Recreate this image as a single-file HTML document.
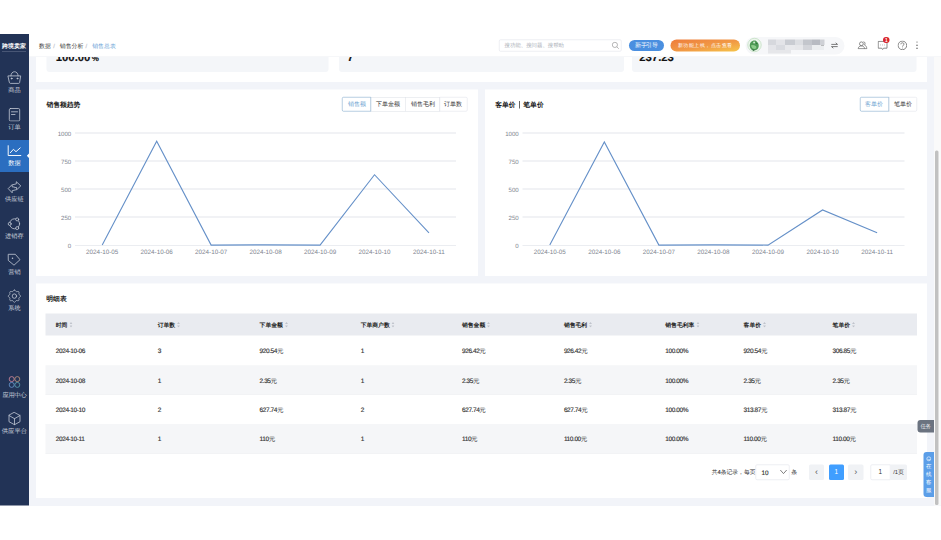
<!DOCTYPE html>
<html><head><meta charset="utf-8"><title>销售总表</title>
<style>
html,body{margin:0;padding:0;background:#fff;width:941px;height:540px;overflow:hidden}
#root{position:absolute;left:0;top:0;width:1882.0px;height:1080.0px;transform:scale(0.5);transform-origin:0 0;font-family:"Liberation Sans",sans-serif;overflow:hidden;background:#fff}
#root>div{position:absolute}
.t{white-space:nowrap;text-rendering:geometricPrecision;-webkit-text-stroke:0.30px currentColor}
i.c{font-style:normal;font-size:133.3%;-webkit-text-stroke:0.36px currentColor;position:relative;top:1.40px}
[style*="bold"] i.c{-webkit-text-stroke:0.60px currentColor}
[style*="--lt"] i.c{-webkit-text-stroke:0.40px currentColor}
.sort{display:inline-block;width:6.00px;height:10.80px;margin-left:4.00px;vertical-align:middle;position:relative;top:-1.00px}
.cjk i.c{font-size:100%;top:0;-webkit-text-stroke:0}
.cjk [style*="bold"] i.c,.cjk [style*="--lt"] i.c{-webkit-text-stroke:0}
</style></head><body><div id="root">
<div style="left:58.00px;top:114.00px;width:1824.00px;height:898.00px;background:#f2f4f9"></div>
<div style="left:72.00px;top:60.00px;width:1782.00px;height:104.00px;background:#fff"></div>
<div style="left:93.20px;top:40.00px;width:564.20px;height:103.60px;background:#f4f6f9;border-radius:6.00px"></div>
<div style="left:677.60px;top:40.00px;width:570.20px;height:103.60px;background:#f4f6f9;border-radius:6.00px"></div>
<div style="left:1263.80px;top:40.00px;width:569.20px;height:103.60px;background:#f4f6f9;border-radius:6.00px"></div>
<div class="t" style="left:111.60px;top:94.80px;height:40.00px;line-height:40.00px;font-size:22.60px;color:#111;font-weight:bold">100.00<span style="font-size:16.00px;margin-left:3.00px">%</span></div>
<div class="t" style="left:694.60px;top:94.80px;height:40.00px;line-height:40.00px;font-size:22.60px;color:#111;font-weight:bold">7</div>
<div class="t" style="left:1278.60px;top:94.80px;height:40.00px;line-height:40.00px;font-size:22.60px;color:#111;font-weight:bold">237.23</div>
<div style="left:71.80px;top:179.20px;width:884.00px;height:372.80px;background:#fff"></div>
<div class="t" style="left:92.80px;top:199.68px;height:19.04px;line-height:19.04px;font-size:13.60px;color:#1a1a1a;font-weight:bold;"><i class="c">销售额趋势</i></div>
<div style="left:684.20px;top:194.40px;width:58.20px;height:28.20px;z-index:2;border:1.20px solid #6e9cc2;box-sizing:border-box;background:#fff;color:#6c9fd0;font-size:11.60px;line-height:26.00px;text-align:center;border-radius:3.00px 0 0 3.00px;"><i class="c">销售额</i></div>
<div style="left:741.40px;top:194.40px;width:70.00px;height:28.20px;border:1.20px solid #dcdfe6;box-sizing:border-box;background:#fff;color:#333;font-size:11.60px;line-height:26.00px;text-align:center;"><i class="c">下单金额</i></div>
<div style="left:810.40px;top:194.40px;width:69.80px;height:28.20px;border:1.20px solid #dcdfe6;box-sizing:border-box;background:#fff;color:#333;font-size:11.60px;line-height:26.00px;text-align:center;"><i class="c">销售毛利</i></div>
<div style="left:879.20px;top:194.40px;width:55.60px;height:28.20px;border:1.20px solid #dcdfe6;box-sizing:border-box;background:#fff;color:#333;font-size:11.60px;line-height:26.00px;text-align:center;border-radius:0 3.00px 3.00px 0;"><i class="c">订单数</i></div>
<div style="left:150.00px;top:489.50px;width:762.40px;height:1.40px;background:#d6dae3"></div>
<div class="t" style="right:1739.60px;top:484.26px;height:17.08px;line-height:17.08px;font-size:12.20px;color:#80858f;font-weight:normal;text-align:right;-webkit-text-stroke:0">0</div>
<div style="left:150.00px;top:433.45px;width:762.40px;height:1.40px;background:#e3e6ec"></div>
<div class="t" style="right:1739.60px;top:428.21px;height:17.08px;line-height:17.08px;font-size:12.20px;color:#80858f;font-weight:normal;text-align:right;-webkit-text-stroke:0">250</div>
<div style="left:150.00px;top:377.40px;width:762.40px;height:1.40px;background:#e3e6ec"></div>
<div class="t" style="right:1739.60px;top:372.16px;height:17.08px;line-height:17.08px;font-size:12.20px;color:#80858f;font-weight:normal;text-align:right;-webkit-text-stroke:0">500</div>
<div style="left:150.00px;top:321.35px;width:762.40px;height:1.40px;background:#e3e6ec"></div>
<div class="t" style="right:1739.60px;top:316.11px;height:17.08px;line-height:17.08px;font-size:12.20px;color:#80858f;font-weight:normal;text-align:right;-webkit-text-stroke:0">750</div>
<div style="left:150.00px;top:265.30px;width:762.40px;height:1.40px;background:#e3e6ec"></div>
<div class="t" style="right:1739.60px;top:260.06px;height:17.08px;line-height:17.08px;font-size:12.20px;color:#80858f;font-weight:normal;text-align:right;-webkit-text-stroke:0">1000</div>
<div class="t" style="left:4.46px;width:400.00px;top:494.98px;height:17.64px;line-height:17.64px;font-size:12.60px;color:#80858f;font-weight:normal;text-align:center;-webkit-text-stroke:0">2024-10-05</div>
<div class="t" style="left:113.37px;width:400.00px;top:494.98px;height:17.64px;line-height:17.64px;font-size:12.60px;color:#80858f;font-weight:normal;text-align:center;-webkit-text-stroke:0">2024-10-06</div>
<div class="t" style="left:222.29px;width:400.00px;top:494.98px;height:17.64px;line-height:17.64px;font-size:12.60px;color:#80858f;font-weight:normal;text-align:center;-webkit-text-stroke:0">2024-10-07</div>
<div class="t" style="left:331.20px;width:400.00px;top:494.98px;height:17.64px;line-height:17.64px;font-size:12.60px;color:#80858f;font-weight:normal;text-align:center;-webkit-text-stroke:0">2024-10-08</div>
<div class="t" style="left:440.11px;width:400.00px;top:494.98px;height:17.64px;line-height:17.64px;font-size:12.60px;color:#80858f;font-weight:normal;text-align:center;-webkit-text-stroke:0">2024-10-09</div>
<div class="t" style="left:549.03px;width:400.00px;top:494.98px;height:17.64px;line-height:17.64px;font-size:12.60px;color:#80858f;font-weight:normal;text-align:center;-webkit-text-stroke:0">2024-10-10</div>
<div class="t" style="left:657.94px;width:400.00px;top:494.98px;height:17.64px;line-height:17.64px;font-size:12.60px;color:#80858f;font-weight:normal;text-align:center;-webkit-text-stroke:0">2024-10-11</div>
<svg style="position:absolute;left:0;top:0;overflow:visible" width="1882.0" height="1080.0"><polyline points="204.46,490.20 313.37,282.50 422.29,490.20 531.20,489.67 640.11,490.20 749.03,349.46 857.94,465.54" fill="none" stroke="#6590c8" stroke-width="2.2" stroke-linejoin="miter"/></svg>
<div style="left:970.20px;top:179.20px;width:883.80px;height:372.80px;background:#fff"></div>
<div class="t" style="left:990.40px;top:199.68px;height:19.04px;line-height:19.04px;font-size:13.60px;color:#1a1a1a;font-weight:bold;"><i class="c">客单价</i></div>
<div class="t" style="left:1046.60px;top:199.68px;height:19.04px;line-height:19.04px;font-size:13.60px;color:#1a1a1a;font-weight:bold;"><i class="c">笔单价</i></div>
<div style="left:1720.40px;top:194.40px;width:57.20px;height:28.20px;z-index:2;border:1.20px solid #6e9cc2;box-sizing:border-box;background:#fff;color:#6c9fd0;font-size:11.60px;line-height:26.00px;text-align:center;border-radius:3.00px 0 0 3.00px;"><i class="c">客单价</i></div>
<div style="left:1776.60px;top:194.40px;width:57.00px;height:28.20px;border:1.20px solid #dcdfe6;box-sizing:border-box;background:#fff;color:#333;font-size:11.60px;line-height:26.00px;text-align:center;border-radius:0 3.00px 3.00px 0;"><i class="c">笔单价</i></div>
<div style="left:1045.00px;top:489.50px;width:763.80px;height:1.40px;background:#d6dae3"></div>
<div class="t" style="right:844.60px;top:484.26px;height:17.08px;line-height:17.08px;font-size:12.20px;color:#80858f;font-weight:normal;text-align:right;-webkit-text-stroke:0">0</div>
<div style="left:1045.00px;top:433.45px;width:763.80px;height:1.40px;background:#e3e6ec"></div>
<div class="t" style="right:844.60px;top:428.21px;height:17.08px;line-height:17.08px;font-size:12.20px;color:#80858f;font-weight:normal;text-align:right;-webkit-text-stroke:0">250</div>
<div style="left:1045.00px;top:377.40px;width:763.80px;height:1.40px;background:#e3e6ec"></div>
<div class="t" style="right:844.60px;top:372.16px;height:17.08px;line-height:17.08px;font-size:12.20px;color:#80858f;font-weight:normal;text-align:right;-webkit-text-stroke:0">500</div>
<div style="left:1045.00px;top:321.35px;width:763.80px;height:1.40px;background:#e3e6ec"></div>
<div class="t" style="right:844.60px;top:316.11px;height:17.08px;line-height:17.08px;font-size:12.20px;color:#80858f;font-weight:normal;text-align:right;-webkit-text-stroke:0">750</div>
<div style="left:1045.00px;top:265.30px;width:763.80px;height:1.40px;background:#e3e6ec"></div>
<div class="t" style="right:844.60px;top:260.06px;height:17.08px;line-height:17.08px;font-size:12.20px;color:#80858f;font-weight:normal;text-align:right;-webkit-text-stroke:0">1000</div>
<div class="t" style="left:899.56px;width:400.00px;top:494.98px;height:17.64px;line-height:17.64px;font-size:12.60px;color:#80858f;font-weight:normal;text-align:center;-webkit-text-stroke:0">2024-10-05</div>
<div class="t" style="left:1008.67px;width:400.00px;top:494.98px;height:17.64px;line-height:17.64px;font-size:12.60px;color:#80858f;font-weight:normal;text-align:center;-webkit-text-stroke:0">2024-10-06</div>
<div class="t" style="left:1117.79px;width:400.00px;top:494.98px;height:17.64px;line-height:17.64px;font-size:12.60px;color:#80858f;font-weight:normal;text-align:center;-webkit-text-stroke:0">2024-10-07</div>
<div class="t" style="left:1226.90px;width:400.00px;top:494.98px;height:17.64px;line-height:17.64px;font-size:12.60px;color:#80858f;font-weight:normal;text-align:center;-webkit-text-stroke:0">2024-10-08</div>
<div class="t" style="left:1336.01px;width:400.00px;top:494.98px;height:17.64px;line-height:17.64px;font-size:12.60px;color:#80858f;font-weight:normal;text-align:center;-webkit-text-stroke:0">2024-10-09</div>
<div class="t" style="left:1445.13px;width:400.00px;top:494.98px;height:17.64px;line-height:17.64px;font-size:12.60px;color:#80858f;font-weight:normal;text-align:center;-webkit-text-stroke:0">2024-10-10</div>
<div class="t" style="left:1554.24px;width:400.00px;top:494.98px;height:17.64px;line-height:17.64px;font-size:12.60px;color:#80858f;font-weight:normal;text-align:center;-webkit-text-stroke:0">2024-10-11</div>
<svg style="position:absolute;left:0;top:0;overflow:visible" width="1882.0" height="1080.0"><polyline points="1099.56,490.20 1208.67,283.81 1317.79,490.20 1426.90,489.67 1536.01,490.20 1645.13,419.83 1754.24,465.54" fill="none" stroke="#6590c8" stroke-width="2.2" stroke-linejoin="miter"/></svg>
<div style="left:1038.40px;top:202.40px;width:1.40px;height:14.40px;background:#666"></div>
<div style="left:71.80px;top:567.40px;width:1782.20px;height:429.00px;background:#fff"></div>
<div class="t" style="left:92.60px;top:588.28px;height:19.04px;line-height:19.04px;font-size:13.60px;color:#1a1a1a;font-weight:bold;"><i class="c">明细表</i></div>
<div style="left:91.40px;top:627.40px;width:1742.20px;height:43.60px;background:#e9ebf0"></div>
<div class="t" style="left:111.60px;top:642.28px;height:16.24px;line-height:16.24px;font-size:11.60px;color:#222;font-weight:bold;--lt:1"><i class="c">时间</i><svg class="sort" viewBox="0 0 6 11"><path d="M3 0 L6 4 H0Z M3 11 L6 7 H0Z" fill="#c0c4cc"/></svg></div>
<div class="t" style="left:315.40px;top:642.28px;height:16.24px;line-height:16.24px;font-size:11.60px;color:#222;font-weight:bold;--lt:1"><i class="c">订单数</i><svg class="sort" viewBox="0 0 6 11"><path d="M3 0 L6 4 H0Z M3 11 L6 7 H0Z" fill="#c0c4cc"/></svg></div>
<div class="t" style="left:519.20px;top:642.28px;height:16.24px;line-height:16.24px;font-size:11.60px;color:#222;font-weight:bold;--lt:1"><i class="c">下单金额</i><svg class="sort" viewBox="0 0 6 11"><path d="M3 0 L6 4 H0Z M3 11 L6 7 H0Z" fill="#c0c4cc"/></svg></div>
<div class="t" style="left:721.40px;top:642.28px;height:16.24px;line-height:16.24px;font-size:11.60px;color:#222;font-weight:bold;--lt:1"><i class="c">下单商户数</i><svg class="sort" viewBox="0 0 6 11"><path d="M3 0 L6 4 H0Z M3 11 L6 7 H0Z" fill="#c0c4cc"/></svg></div>
<div class="t" style="left:924.00px;top:642.28px;height:16.24px;line-height:16.24px;font-size:11.60px;color:#222;font-weight:bold;--lt:1"><i class="c">销售金额</i><svg class="sort" viewBox="0 0 6 11"><path d="M3 0 L6 4 H0Z M3 11 L6 7 H0Z" fill="#c0c4cc"/></svg></div>
<div class="t" style="left:1127.80px;top:642.28px;height:16.24px;line-height:16.24px;font-size:11.60px;color:#222;font-weight:bold;--lt:1"><i class="c">销售毛利</i><svg class="sort" viewBox="0 0 6 11"><path d="M3 0 L6 4 H0Z M3 11 L6 7 H0Z" fill="#c0c4cc"/></svg></div>
<div class="t" style="left:1330.60px;top:642.28px;height:16.24px;line-height:16.24px;font-size:11.60px;color:#222;font-weight:bold;--lt:1"><i class="c">销售毛利率</i><svg class="sort" viewBox="0 0 6 11"><path d="M3 0 L6 4 H0Z M3 11 L6 7 H0Z" fill="#c0c4cc"/></svg></div>
<div class="t" style="left:1487.20px;top:642.28px;height:16.24px;line-height:16.24px;font-size:11.60px;color:#222;font-weight:bold;--lt:1"><i class="c">客单价</i><svg class="sort" viewBox="0 0 6 11"><path d="M3 0 L6 4 H0Z M3 11 L6 7 H0Z" fill="#c0c4cc"/></svg></div>
<div class="t" style="left:1665.20px;top:642.28px;height:16.24px;line-height:16.24px;font-size:11.60px;color:#222;font-weight:bold;--lt:1"><i class="c">笔单价</i><svg class="sort" viewBox="0 0 6 11"><path d="M3 0 L6 4 H0Z M3 11 L6 7 H0Z" fill="#c0c4cc"/></svg></div>
<div style="left:91.40px;top:731.00px;width:1742.20px;height:1.20px;background:#eef0f3"></div>
<div class="t" style="left:111.60px;top:692.60px;height:18.20px;line-height:18.20px;font-size:13.00px;color:#333;font-weight:normal;letter-spacing:-0.84px">2024-10-06</div>
<div class="t" style="left:315.40px;top:692.60px;height:18.20px;line-height:18.20px;font-size:13.00px;color:#333;font-weight:normal;letter-spacing:-0.84px">3</div>
<div class="t" style="left:519.20px;top:692.60px;height:18.20px;line-height:18.20px;font-size:13.00px;color:#333;font-weight:normal;letter-spacing:-0.84px">920.54<i class="c">元</i></div>
<div class="t" style="left:721.40px;top:692.60px;height:18.20px;line-height:18.20px;font-size:13.00px;color:#333;font-weight:normal;letter-spacing:-0.84px">1</div>
<div class="t" style="left:924.00px;top:692.60px;height:18.20px;line-height:18.20px;font-size:13.00px;color:#333;font-weight:normal;letter-spacing:-0.84px">926.42<i class="c">元</i></div>
<div class="t" style="left:1127.80px;top:692.60px;height:18.20px;line-height:18.20px;font-size:13.00px;color:#333;font-weight:normal;letter-spacing:-0.84px">926.42<i class="c">元</i></div>
<div class="t" style="left:1330.60px;top:692.60px;height:18.20px;line-height:18.20px;font-size:13.00px;color:#333;font-weight:normal;letter-spacing:-0.84px">100.00%</div>
<div class="t" style="left:1487.20px;top:692.60px;height:18.20px;line-height:18.20px;font-size:13.00px;color:#333;font-weight:normal;letter-spacing:-0.84px">920.54<i class="c">元</i></div>
<div class="t" style="left:1665.20px;top:692.60px;height:18.20px;line-height:18.20px;font-size:13.00px;color:#333;font-weight:normal;letter-spacing:-0.84px">306.85<i class="c">元</i></div>
<div style="left:91.40px;top:731.60px;width:1742.20px;height:58.00px;background:#f5f6f8"></div>
<div style="left:91.40px;top:789.00px;width:1742.20px;height:1.20px;background:#eef0f3"></div>
<div class="t" style="left:111.60px;top:751.90px;height:18.20px;line-height:18.20px;font-size:13.00px;color:#333;font-weight:normal;letter-spacing:-0.84px">2024-10-08</div>
<div class="t" style="left:315.40px;top:751.90px;height:18.20px;line-height:18.20px;font-size:13.00px;color:#333;font-weight:normal;letter-spacing:-0.84px">1</div>
<div class="t" style="left:519.20px;top:751.90px;height:18.20px;line-height:18.20px;font-size:13.00px;color:#333;font-weight:normal;letter-spacing:-0.84px">2.35<i class="c">元</i></div>
<div class="t" style="left:721.40px;top:751.90px;height:18.20px;line-height:18.20px;font-size:13.00px;color:#333;font-weight:normal;letter-spacing:-0.84px">1</div>
<div class="t" style="left:924.00px;top:751.90px;height:18.20px;line-height:18.20px;font-size:13.00px;color:#333;font-weight:normal;letter-spacing:-0.84px">2.35<i class="c">元</i></div>
<div class="t" style="left:1127.80px;top:751.90px;height:18.20px;line-height:18.20px;font-size:13.00px;color:#333;font-weight:normal;letter-spacing:-0.84px">2.35<i class="c">元</i></div>
<div class="t" style="left:1330.60px;top:751.90px;height:18.20px;line-height:18.20px;font-size:13.00px;color:#333;font-weight:normal;letter-spacing:-0.84px">100.00%</div>
<div class="t" style="left:1487.20px;top:751.90px;height:18.20px;line-height:18.20px;font-size:13.00px;color:#333;font-weight:normal;letter-spacing:-0.84px">2.35<i class="c">元</i></div>
<div class="t" style="left:1665.20px;top:751.90px;height:18.20px;line-height:18.20px;font-size:13.00px;color:#333;font-weight:normal;letter-spacing:-0.84px">2.35<i class="c">元</i></div>
<div style="left:91.40px;top:847.60px;width:1742.20px;height:1.20px;background:#eef0f3"></div>
<div class="t" style="left:111.60px;top:810.20px;height:18.20px;line-height:18.20px;font-size:13.00px;color:#333;font-weight:normal;letter-spacing:-0.84px">2024-10-10</div>
<div class="t" style="left:315.40px;top:810.20px;height:18.20px;line-height:18.20px;font-size:13.00px;color:#333;font-weight:normal;letter-spacing:-0.84px">2</div>
<div class="t" style="left:519.20px;top:810.20px;height:18.20px;line-height:18.20px;font-size:13.00px;color:#333;font-weight:normal;letter-spacing:-0.84px">627.74<i class="c">元</i></div>
<div class="t" style="left:721.40px;top:810.20px;height:18.20px;line-height:18.20px;font-size:13.00px;color:#333;font-weight:normal;letter-spacing:-0.84px">2</div>
<div class="t" style="left:924.00px;top:810.20px;height:18.20px;line-height:18.20px;font-size:13.00px;color:#333;font-weight:normal;letter-spacing:-0.84px">627.74<i class="c">元</i></div>
<div class="t" style="left:1127.80px;top:810.20px;height:18.20px;line-height:18.20px;font-size:13.00px;color:#333;font-weight:normal;letter-spacing:-0.84px">627.74<i class="c">元</i></div>
<div class="t" style="left:1330.60px;top:810.20px;height:18.20px;line-height:18.20px;font-size:13.00px;color:#333;font-weight:normal;letter-spacing:-0.84px">100.00%</div>
<div class="t" style="left:1487.20px;top:810.20px;height:18.20px;line-height:18.20px;font-size:13.00px;color:#333;font-weight:normal;letter-spacing:-0.84px">313.87<i class="c">元</i></div>
<div class="t" style="left:1665.20px;top:810.20px;height:18.20px;line-height:18.20px;font-size:13.00px;color:#333;font-weight:normal;letter-spacing:-0.84px">313.87<i class="c">元</i></div>
<div style="left:91.40px;top:848.20px;width:1742.20px;height:59.60px;background:#f5f6f8"></div>
<div style="left:91.40px;top:907.20px;width:1742.20px;height:1.20px;background:#eef0f3"></div>
<div class="t" style="left:111.60px;top:869.30px;height:18.20px;line-height:18.20px;font-size:13.00px;color:#333;font-weight:normal;letter-spacing:-0.84px">2024-10-11</div>
<div class="t" style="left:315.40px;top:869.30px;height:18.20px;line-height:18.20px;font-size:13.00px;color:#333;font-weight:normal;letter-spacing:-0.84px">1</div>
<div class="t" style="left:519.20px;top:869.30px;height:18.20px;line-height:18.20px;font-size:13.00px;color:#333;font-weight:normal;letter-spacing:-0.84px">110<i class="c">元</i></div>
<div class="t" style="left:721.40px;top:869.30px;height:18.20px;line-height:18.20px;font-size:13.00px;color:#333;font-weight:normal;letter-spacing:-0.84px">1</div>
<div class="t" style="left:924.00px;top:869.30px;height:18.20px;line-height:18.20px;font-size:13.00px;color:#333;font-weight:normal;letter-spacing:-0.84px">110<i class="c">元</i></div>
<div class="t" style="left:1127.80px;top:869.30px;height:18.20px;line-height:18.20px;font-size:13.00px;color:#333;font-weight:normal;letter-spacing:-0.84px">110.00<i class="c">元</i></div>
<div class="t" style="left:1330.60px;top:869.30px;height:18.20px;line-height:18.20px;font-size:13.00px;color:#333;font-weight:normal;letter-spacing:-0.84px">100.00%</div>
<div class="t" style="left:1487.20px;top:869.30px;height:18.20px;line-height:18.20px;font-size:13.00px;color:#333;font-weight:normal;letter-spacing:-0.84px">110.00<i class="c">元</i></div>
<div class="t" style="left:1665.20px;top:869.30px;height:18.20px;line-height:18.20px;font-size:13.00px;color:#333;font-weight:normal;letter-spacing:-0.84px">110.00<i class="c">元</i></div>
<div class="t" style="left:1423.40px;top:936.68px;height:16.24px;line-height:16.24px;font-size:11.60px;color:#333;font-weight:normal;"><i class="c">共</i>4<i class="c">条记录，每页</i></div>
<div style="left:1511.20px;top:929.00px;width:68.00px;height:30.60px;border:1.20px solid #dcdfe6;box-sizing:border-box;background:#fff;border-radius:3.00px"></div>
<div class="t" style="left:1523.00px;top:935.84px;height:17.92px;line-height:17.92px;font-size:12.80px;color:#333;font-weight:normal;">10</div>
<svg style="position:absolute;left:1559.00px;top:938.40px" width="16.00px" height="12.00px" viewBox="0 0 8 6"><polyline points="0.8,1 4,4.6 7.2,1" fill="none" stroke="#555" stroke-width="0.75"/></svg>
<div class="t" style="left:1582.60px;top:936.68px;height:16.24px;line-height:16.24px;font-size:11.60px;color:#333;font-weight:normal;"><i class="c">条</i></div>
<div style="left:1618.20px;top:929.00px;width:29.60px;height:30.60px;background:#f0f2f5;border-radius:3.00px;color:#555;font-size:18.00px;line-height:29.00px;text-align:center">&lsaquo;</div>
<div style="left:1658.00px;top:929.00px;width:29.60px;height:30.60px;background:#409eff;border-radius:3.00px;color:#fff;font-size:12.80px;line-height:30.60px;text-align:center">1</div>
<div style="left:1696.40px;top:929.00px;width:30.60px;height:30.60px;background:#f0f2f5;border-radius:3.00px;color:#555;font-size:18.00px;line-height:29.00px;text-align:center">&rsaquo;</div>
<div style="left:1740.80px;top:929.00px;width:40.00px;height:30.60px;border:1.20px solid #dcdfe6;box-sizing:border-box;background:#fff;border-radius:3.00px 0 0 3.00px;color:#333;font-size:12.80px;line-height:28.00px;text-align:center">1</div>
<div style="left:1780.60px;top:929.00px;width:33.00px;height:30.60px;background:#f0f2f5;border-radius:0 3.00px 3.00px 0;color:#333;font-size:11.60px;line-height:30.60px;text-align:center">/1<i class="c">页</i></div>
<div style="left:1835.20px;top:840.40px;width:32.40px;height:24.80px;background:#6b7380;border-radius:6.00px 0 0 6.00px"></div>
<div class="t" style="left:1651.60px;width:400.00px;top:845.64px;height:15.12px;line-height:15.12px;font-size:10.80px;color:#eef0f3;font-weight:normal;text-align:center;"><i class="c">任务</i></div>
<div style="left:1847.00px;top:904.40px;width:21.00px;height:89.60px;background:#5b9ee8;border-radius:6.00px 0 0 6.00px"></div>
<svg style="position:absolute;left:1851.80px;top:912.40px" width="11.20px" height="11.20px" viewBox="0 0 5.6 5.6" fill="none" stroke="#fff" stroke-width="0.6"><circle cx="2.8" cy="2.8" r="2"/><path d="M1.6 3.2 C2.2 3.9 3.4 3.9 4 3.2"/></svg>
<div class="t" style="left:1657.60px;width:400.00px;top:926.44px;height:15.12px;line-height:15.12px;font-size:10.80px;color:#fff;font-weight:normal;text-align:center;"><i class="c">在</i></div>
<div class="t" style="left:1657.60px;width:400.00px;top:942.04px;height:15.12px;line-height:15.12px;font-size:10.80px;color:#fff;font-weight:normal;text-align:center;"><i class="c">线</i></div>
<div class="t" style="left:1657.60px;width:400.00px;top:957.64px;height:15.12px;line-height:15.12px;font-size:10.80px;color:#fff;font-weight:normal;text-align:center;"><i class="c">客</i></div>
<div class="t" style="left:1657.60px;width:400.00px;top:973.24px;height:15.12px;line-height:15.12px;font-size:10.80px;color:#fff;font-weight:normal;text-align:center;"><i class="c">服</i></div>
<div style="left:1868.00px;top:114.00px;width:14.00px;height:897.20px;background:#fafafa"></div>
<div style="left:1869.60px;top:301.00px;width:7.60px;height:709.00px;background:#c1c1c1;border-radius:3.00px"></div>
<div style="left:0.00px;top:0.00px;width:1882.00px;height:68.00px;background:#fff"></div>
<div style="left:58.00px;top:68.00px;width:1824.00px;height:46.00px;background:#fff;border-bottom:1.20px solid #eceef2;box-sizing:border-box"></div>
<div class="t" style="left:78.00px;top:84.14px;height:16.52px;line-height:16.52px;font-size:11.80px;color:#333;font-weight:normal;"><i class="c">数据</i></div>
<div class="t" style="left:106.40px;top:84.14px;height:16.52px;line-height:16.52px;font-size:11.80px;color:#c0c4cc;font-weight:normal;">/</div>
<div class="t" style="left:119.60px;top:84.14px;height:16.52px;line-height:16.52px;font-size:11.80px;color:#333;font-weight:normal;"><i class="c">销售分析</i></div>
<div class="t" style="left:171.20px;top:84.14px;height:16.52px;line-height:16.52px;font-size:11.80px;color:#c0c4cc;font-weight:normal;">/</div>
<div class="t" style="left:184.40px;top:84.14px;height:16.52px;line-height:16.52px;font-size:11.80px;color:#6a9fd6;font-weight:normal;"><i class="c">销售总表</i></div>
<div style="left:998.40px;top:78.80px;width:244.80px;height:23.80px;border:1.20px solid #dcdfe6;box-sizing:border-box;background:#fff;border-radius:3.00px"></div>
<div class="t" style="left:1009.20px;top:83.24px;height:15.12px;line-height:15.12px;font-size:10.80px;color:#a9aeb6;font-weight:normal;"><i class="c">搜功能、搜问题、搜帮助</i></div>
<svg style="position:absolute;left:1223.00px;top:82.60px" width="16.00px" height="16.00px" viewBox="0 0 8 8"><circle cx="3.4" cy="3.4" r="2.6" fill="none" stroke="#888" stroke-width="0.6"/><line x1="5.3" y1="5.3" x2="7.3" y2="7.3" stroke="#888" stroke-width="0.6"/></svg>
<div style="left:1257.60px;top:80.40px;width:70.80px;height:21.40px;background:#4a8fe0;border-radius:12.00px;color:#fff;font-size:11.20px;line-height:21.40px;text-align:center"><i class="c">新手引导</i></div>
<div style="left:1340.80px;top:78.80px;width:139.20px;height:23.80px;background:linear-gradient(170deg,#ee7c3c 0%,#f19a45 55%,#f6c54b 100%);border-radius:12.00px;color:#fff;font-size:10.80px;line-height:23.80px;text-align:center"><i class="c">新功能上线，点击查看</i></div>
<div style="left:1490.60px;top:74.40px;width:198.80px;height:34.20px;background:#f6f7f9;border-radius:18.00px"></div>
<div style="left:1494.80px;top:75.80px;width:28.00px;height:28.00px;background:#eef6ee;border:1.20px solid #a9d3a6;border-radius:50%;box-sizing:border-box"></div>
<svg style="position:absolute;left:1494.80px;top:75.80px" width="28.00px" height="28.00px" viewBox="0 0 14 14"><path d="M2.6 9.6 C1.6 6.4 3 3.4 6 2.6 C7.6 2.2 8.6 2.6 9.4 3.8 C11.2 5 11.8 7.6 10.8 10 C10 12 7.6 12.8 5.4 12.4 C4 12.1 3.1 11.1 2.6 9.6Z" fill="#4f9a55"/><path d="M3.4 7.6 C4.6 6.6 6.6 6.8 8.2 8 C9 8.6 9.2 9.8 8.4 10.6 C6.8 11.6 4.4 11 3.4 7.6Z" fill="#8ccc8a"/><circle cx="6.6" cy="4.6" r="1" fill="#cfe9cf"/><circle cx="9.2" cy="5.4" r="0.7" fill="#2f6f3a"/><path d="M4.6 11.4 L6.2 13 L7.2 11.8" fill="#2f5f40"/></svg>
<div style="left:1535.60px;top:78.60px;width:16.00px;height:11.00px;background:#d6d8dd"></div>
<div style="left:1551.60px;top:78.60px;width:18.00px;height:11.00px;background:#e3e4e8"></div>
<div style="left:1569.60px;top:78.60px;width:20.00px;height:11.00px;background:#c9ccd2"></div>
<div style="left:1589.60px;top:78.60px;width:16.00px;height:11.00px;background:#dcdee2"></div>
<div style="left:1605.60px;top:78.60px;width:18.00px;height:11.00px;background:#c3c6cc"></div>
<div style="left:1623.60px;top:78.60px;width:16.00px;height:11.00px;background:#b8bbc2"></div>
<div style="left:1639.60px;top:78.60px;width:9.20px;height:11.00px;background:#cfd1d6"></div>
<div style="left:1535.60px;top:89.60px;width:16.00px;height:10.40px;background:#e4e5e9"></div>
<div style="left:1551.60px;top:89.60px;width:18.00px;height:10.40px;background:#d9dbe0"></div>
<div style="left:1569.60px;top:89.60px;width:20.00px;height:10.40px;background:#e8e9ec"></div>
<div style="left:1589.60px;top:89.60px;width:16.00px;height:10.40px;background:#e6e7ea"></div>
<div style="left:1605.60px;top:89.60px;width:18.00px;height:10.40px;background:#d3d5da"></div>
<div style="left:1623.60px;top:89.60px;width:24.00px;height:10.40px;background:#eceef0"></div>
<div style="left:1535.60px;top:100.00px;width:46.00px;height:7.20px;background:#e6e7ea"></div>
<div style="left:1642.00px;top:90.00px;width:6.00px;height:1.40px;background:#888"></div>
<svg style="position:absolute;left:1661.00px;top:84.00px" width="16.00px" height="14.00px" viewBox="0 0 8 7" fill="none" stroke="#444" stroke-width="0.7"><path d="M0.8 2.4 H7 L5.2 0.8 M7.2 4.6 H1 L2.8 6.2"/></svg>
<svg style="position:absolute;left:1714.00px;top:81.00px" width="22.00px" height="18.00px" viewBox="0 0 11 9" fill="none" stroke="#666" stroke-width="0.75" stroke-linejoin="round">
<circle cx="4.4" cy="3.3" r="1.9"/><path d="M1.2 8.2 C1.4 6.2 2.8 5.4 4.4 5.4 C6 5.4 7.4 6.2 7.6 8.2 Z"/><path d="M6.4 1.3 C7.9 1.3 8.6 3 7.6 4.6 C8.9 5.1 9.7 6.3 9.8 8.2 H7.6"/></svg>
<svg style="position:absolute;left:1754.60px;top:81.00px" width="21.00px" height="20.00px" viewBox="0 0 10.5 10" fill="none" stroke="#666" stroke-width="0.75" stroke-linejoin="round">
<path d="M0.7 0.9 H9.5 V7.7 H6 L5.1 9 L4.2 7.7 H0.7 Z"/><circle cx="3.2" cy="4.4" r="0.45" fill="#666" stroke="none"/><circle cx="5.1" cy="4.4" r="0.45" fill="#666" stroke="none"/><circle cx="7" cy="4.4" r="0.45" fill="#666" stroke="none"/></svg>
<div style="left:1766.40px;top:73.60px;width:12.80px;height:12.80px;background:#d9252b;border-radius:50%;color:#fff;font-size:9.60px;line-height:12.80px;text-align:center;font-weight:bold">1</div>
<svg style="position:absolute;left:1794.60px;top:80.60px" width="19.60px" height="19.60px" viewBox="0 0 9.8 9.8" fill="none" stroke="#555" stroke-width="0.7">
<circle cx="4.9" cy="4.9" r="4.3"/><path d="M3.4 3.8 C3.4 2.7 4.1 2.3 4.9 2.3 C5.8 2.3 6.5 2.9 6.5 3.7 C6.5 4.8 5 4.9 5 6.1"/><circle cx="5" cy="7.5" r="0.42" fill="#555" stroke="none"/></svg>
<div style="left:1832.60px;top:82.70px;width:2.60px;height:2.60px;background:#333;border-radius:50%"></div>
<div style="left:1832.60px;top:89.10px;width:2.60px;height:2.60px;background:#333;border-radius:50%"></div>
<div style="left:1832.60px;top:95.30px;width:2.60px;height:2.60px;background:#333;border-radius:50%"></div>
<div style="left:0.00px;top:68.00px;width:58.00px;height:943.20px;background:#223356"></div>
<div class="t" style="left:-172.00px;width:400.00px;top:83.60px;height:16.80px;line-height:16.80px;font-size:12.00px;color:#fff;font-weight:bold;text-align:center;font-style:italic"><i class="c">跨境卖家</i></div>
<div style="left:4.00px;top:102.00px;width:48.00px;height:1.00px;background:#6f7b94"></div>
<div style="left:0.00px;top:280.20px;width:58.00px;height:63.40px;background:#2b6ec0"></div>
<svg style="position:absolute;left:53.20px;top:306.00px" width="6.00px" height="11.00px" viewBox="0 0 3 5.5"><path d="M3 0 L0.3 2.75 L3 5.5Z" fill="#fff"/></svg>
<svg style="position:absolute;left:14.00px;top:141.00px" width="30.00px" height="28.00px" viewBox="0 0 15 14" fill="none" stroke="#c3c9d6" stroke-width="0.8" stroke-linejoin="round" stroke-linecap="round"><path d="M1.3 5.4 H13.7 L12.6 12.1 Q12.4 12.9 11.6 12.9 H3.4 Q2.6 12.9 2.4 12.1 Z"/><path d="M3.9 5.4 C3.9 -0.3 11.1 -0.3 11.1 5.4"/><circle cx="4.6" cy="8" r="0.5" fill="#c3c9d6"/><circle cx="10.4" cy="8" r="0.5" fill="#c3c9d6"/></svg>
<div class="t" style="left:-171.20px;width:400.00px;top:171.72px;height:17.36px;line-height:17.36px;font-size:12.40px;color:#c9cfdb;font-weight:normal;text-align:center;"><i class="c">商品</i></div>
<svg style="position:absolute;left:14.00px;top:215.00px" width="30.00px" height="28.00px" viewBox="0 0 15 14" fill="none" stroke="#c3c9d6" stroke-width="0.8" stroke-linejoin="round" stroke-linecap="round"><rect x="2.3" y="1" width="10.4" height="12.5" rx="1.3"/><path d="M4.5 4.3 H10.5 M4.5 7 H8"/></svg>
<div class="t" style="left:-171.20px;width:400.00px;top:245.32px;height:17.36px;line-height:17.36px;font-size:12.40px;color:#c9cfdb;font-weight:normal;text-align:center;"><i class="c">订单</i></div>
<svg style="position:absolute;left:14.00px;top:287.00px" width="30.00px" height="28.00px" viewBox="0 0 15 14" fill="none" stroke="#fff" stroke-width="0.95" stroke-linejoin="round" stroke-linecap="round"><path d="M1.2 2.2 V12 H13.8"/><path d="M3.4 9.2 L6.4 5.8 L9 8.2 L13.2 4.4"/></svg>
<div class="t" style="left:-171.20px;width:400.00px;top:317.72px;height:17.36px;line-height:17.36px;font-size:12.40px;color:#fff;font-weight:normal;text-align:center;"><i class="c">数据</i></div>
<svg style="position:absolute;left:14.00px;top:360.60px" width="30.00px" height="28.00px" viewBox="0 0 15 14" fill="none" stroke="#c3c9d6" stroke-width="0.8" stroke-linejoin="round" stroke-linecap="round"><path d="M5.8 4.2 L9.3 3.4 L9.3 1.2 L13.8 5.4 L9.6 9.3 L9.5 6.9 L7.6 7.2"/><path d="M8.8 9.3 L5.2 10.2 L5.2 12.3 L1.2 8.1 L5.1 4.1 L5.2 6.4 L7.2 6.5"/></svg>
<div class="t" style="left:-171.20px;width:400.00px;top:390.12px;height:17.36px;line-height:17.36px;font-size:12.40px;color:#c9cfdb;font-weight:normal;text-align:center;"><i class="c">供应链</i></div>
<svg style="position:absolute;left:14.00px;top:432.60px" width="30.00px" height="28.00px" viewBox="0 0 15 14" fill="none" stroke="#c3c9d6" stroke-width="0.8" stroke-linejoin="round" stroke-linecap="round"><circle cx="7.6" cy="7.3" r="5"/><circle cx="10.2" cy="2.9" r="1.5" fill="#223356"/><circle cx="2.7" cy="7.4" r="1.5" fill="#223356"/><circle cx="10.2" cy="11.6" r="1.5" fill="#223356"/></svg>
<div class="t" style="left:-171.20px;width:400.00px;top:463.32px;height:17.36px;line-height:17.36px;font-size:12.40px;color:#c9cfdb;font-weight:normal;text-align:center;"><i class="c">进销存</i></div>
<svg style="position:absolute;left:14.00px;top:506.00px" width="30.00px" height="28.00px" viewBox="0 0 15 14" fill="none" stroke="#c3c9d6" stroke-width="0.8" stroke-linejoin="round" stroke-linecap="round"><path d="M1.6 1.3 H8.3 L13 6.7 L7 12.2 L1.6 7.7 Z"/><circle cx="5.5" cy="5.2" r="0.75" fill="#c3c9d6" stroke="none"/></svg>
<div class="t" style="left:-171.20px;width:400.00px;top:535.32px;height:17.36px;line-height:17.36px;font-size:12.40px;color:#c9cfdb;font-weight:normal;text-align:center;"><i class="c">营销</i></div>
<svg style="position:absolute;left:14.00px;top:579.40px" width="30.00px" height="28.00px" viewBox="0 0 15 14" fill="none" stroke="#c3c9d6" stroke-width="0.8" stroke-linejoin="round" stroke-linecap="round"><path d="M7.40 0.45 L7.64 0.49 L7.87 0.59 L8.09 0.76 L8.29 0.97 L8.47 1.21 L8.64 1.45 L8.79 1.67 L8.94 1.87 L9.09 2.02 L9.26 2.12 L9.44 2.17 L9.66 2.17 L9.90 2.13 L10.17 2.08 L10.46 2.03 L10.75 1.99 L11.04 1.98 L11.31 2.02 L11.55 2.11 L11.75 2.25 L11.89 2.45 L11.98 2.69 L12.02 2.96 L12.01 3.25 L11.97 3.54 L11.92 3.83 L11.87 4.10 L11.83 4.34 L11.83 4.56 L11.88 4.74 L11.98 4.91 L12.13 5.06 L12.33 5.21 L12.55 5.36 L12.79 5.53 L13.03 5.71 L13.24 5.91 L13.41 6.13 L13.51 6.36 L13.55 6.60 L13.51 6.84 L13.41 7.07 L13.24 7.29 L13.03 7.49 L12.79 7.67 L12.55 7.84 L12.33 7.99 L12.13 8.14 L11.98 8.29 L11.88 8.46 L11.83 8.64 L11.83 8.86 L11.87 9.10 L11.92 9.37 L11.97 9.66 L12.01 9.95 L12.02 10.24 L11.98 10.51 L11.89 10.75 L11.75 10.95 L11.55 11.09 L11.31 11.18 L11.04 11.22 L10.75 11.21 L10.46 11.17 L10.17 11.12 L9.90 11.07 L9.66 11.03 L9.44 11.03 L9.26 11.08 L9.09 11.18 L8.94 11.33 L8.79 11.53 L8.64 11.75 L8.47 11.99 L8.29 12.23 L8.09 12.44 L7.87 12.61 L7.64 12.71 L7.40 12.75 L7.16 12.71 L6.93 12.61 L6.71 12.44 L6.51 12.23 L6.33 11.99 L6.16 11.75 L6.01 11.53 L5.86 11.33 L5.71 11.18 L5.54 11.08 L5.36 11.03 L5.14 11.03 L4.90 11.07 L4.63 11.12 L4.34 11.17 L4.05 11.21 L3.76 11.22 L3.49 11.18 L3.25 11.09 L3.05 10.95 L2.91 10.75 L2.82 10.51 L2.78 10.24 L2.79 9.95 L2.83 9.66 L2.88 9.37 L2.93 9.10 L2.97 8.86 L2.97 8.64 L2.92 8.46 L2.82 8.29 L2.67 8.14 L2.47 7.99 L2.25 7.84 L2.01 7.67 L1.77 7.49 L1.56 7.29 L1.39 7.07 L1.29 6.84 L1.25 6.60 L1.29 6.36 L1.39 6.13 L1.56 5.91 L1.77 5.71 L2.01 5.53 L2.25 5.36 L2.47 5.21 L2.67 5.06 L2.82 4.91 L2.92 4.74 L2.97 4.56 L2.97 4.34 L2.93 4.10 L2.88 3.83 L2.83 3.54 L2.79 3.25 L2.78 2.96 L2.82 2.69 L2.91 2.45 L3.05 2.25 L3.25 2.11 L3.49 2.02 L3.76 1.98 L4.05 1.99 L4.34 2.03 L4.63 2.08 L4.90 2.13 L5.14 2.17 L5.36 2.17 L5.54 2.12 L5.71 2.02 L5.86 1.87 L6.01 1.67 L6.16 1.45 L6.33 1.21 L6.51 0.97 L6.71 0.76 L6.93 0.59 L7.16 0.49 L7.40 0.45Z"/><circle cx="7.4" cy="6.6" r="2.2"/></svg>
<div class="t" style="left:-171.20px;width:400.00px;top:607.92px;height:17.36px;line-height:17.36px;font-size:12.40px;color:#c9cfdb;font-weight:normal;text-align:center;"><i class="c">系统</i></div>
<svg style="position:absolute;left:14.60px;top:751.00px" width="28.00px" height="26.00px" viewBox="0 0 14 13" fill="none" stroke-width="0.8">
<circle cx="4.2" cy="3.6" r="2.5" stroke="#d98aa0"/><circle cx="9.8" cy="3.6" r="2.5" stroke="#c79a7f"/><circle cx="4.2" cy="9.4" r="2.5" stroke="#6c9bd3"/><circle cx="9.8" cy="9.4" r="2.5" stroke="#5fa6b5"/></svg>
<div class="t" style="left:-171.20px;width:400.00px;top:780.58px;height:17.64px;line-height:17.64px;font-size:12.60px;color:#c9cfdb;font-weight:normal;text-align:center;letter-spacing:-0.60px"><i class="c">应用中心</i></div>
<svg style="position:absolute;left:14.00px;top:822.60px" width="30.00px" height="28.00px" viewBox="0 0 15 14" fill="none" stroke="#c3c9d6" stroke-width="0.8" stroke-linejoin="round" stroke-linecap="round"><path d="M7.5 1 L13 4 V10.2 L7.5 13.2 L2 10.2 V4 Z"/><path d="M2 4 L7.5 7.2 L13 4 M7.5 7.2 V13.2"/></svg>
<div class="t" style="left:-171.20px;width:400.00px;top:852.58px;height:17.64px;line-height:17.64px;font-size:12.60px;color:#c9cfdb;font-weight:normal;text-align:center;"><i class="c">供应平台</i></div>
</div>
<script>
(function(){var s=document.createElement('span');s.style.cssText='position:absolute;left:0;top:0;font-size:100px;font-family:"Liberation Sans",sans-serif;white-space:nowrap;visibility:hidden';s.textContent='数据销售';document.body.appendChild(s);var w=s.getBoundingClientRect().width;document.body.removeChild(s);if(w>350){document.documentElement.className+=' cjk';}})();
</script>
</body></html>
